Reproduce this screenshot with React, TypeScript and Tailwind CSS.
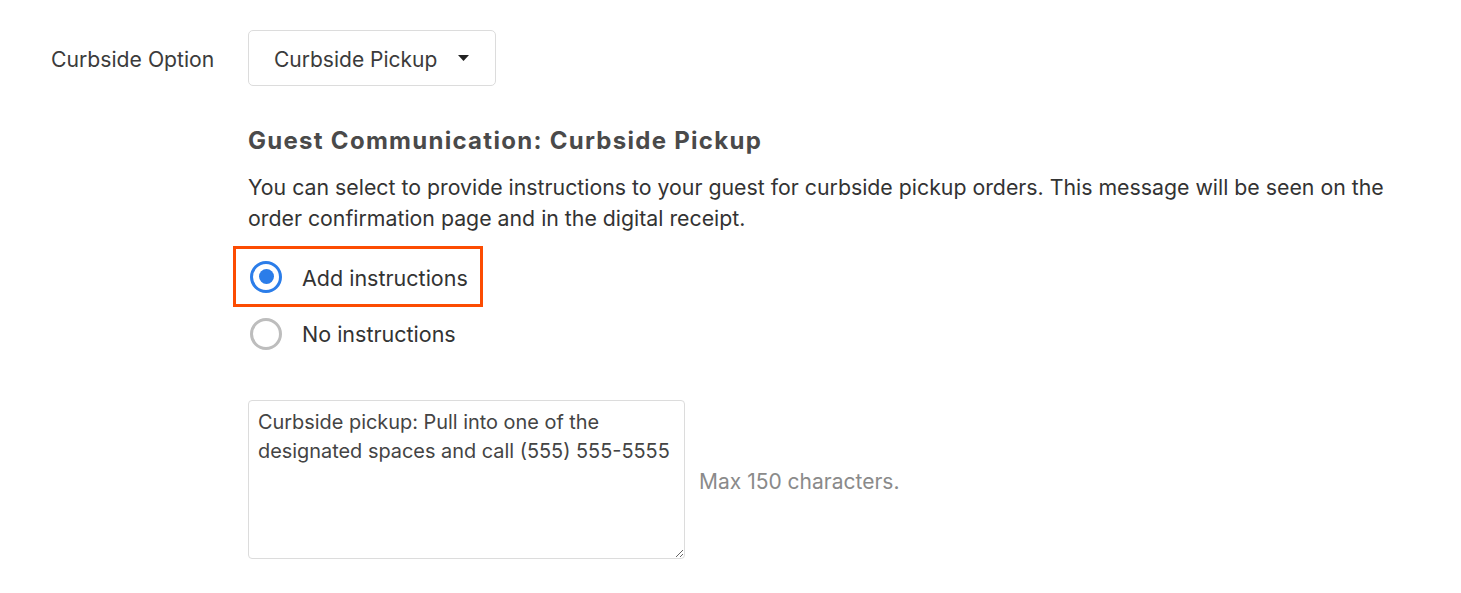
import React from "react";

export default function App() {
  return (
    <div className="w-[1461px] h-[593px] bg-white text-[#333333]" style={{ fontFamily: "Inter, 'Noto Sans', sans-serif" }}>
      <div className="pl-[51px] pt-[30px] flex items-center">
        <div className="w-[197px] text-[21.2px] text-[#3b3b3b] pt-[3px]">Curbside Option</div>
        <button className="h-[56px] w-[248px] border border-[#dcdcdc] rounded-[5px] flex items-center pl-[25px] pr-[26px] justify-between bg-white">
          <span className="text-[21px] text-[#3b3b3b] pt-[3px]">Curbside Pickup</span>
          <svg width="11" height="6" viewBox="0 0 11 6"><path d="M0 0h11L5.5 6z" fill="#222" /></svg>
        </button>
      </div>
      <div className="pl-[248px] pt-[40px]">
        <h2 className="text-[24px] font-bold text-[#4a4a4a] leading-[30px] tracking-[1.28px]">Guest Communication: Curbside Pickup</h2>
        <p className="mt-[16px] text-[21.3px] leading-[31px] text-[#333] w-[1160px]">
          You can select to provide instructions to your guest for curbside pickup orders. This message will be seen on the order confirmation page and in the digital receipt.
        </p>
        <div className="mt-[12px] -ml-[15px] w-[250px] h-[61px] border-[3px] border-[#fc4c02] flex items-center pl-[14px]">
          <span className="w-[32px] h-[32px] rounded-full border-[3px] border-[#2b7de9] flex items-center justify-center">
            <span className="w-[15px] h-[15px] rounded-full bg-[#2b7de9]" />
          </span>
          <span className="ml-[20px] text-[21.5px] text-[#333] pt-[3px]">Add instructions</span>
        </div>
        <div className="mt-[11px] flex items-center h-[32px] ml-[2px]">
          <span className="w-[32px] h-[32px] rounded-full border-[3px] border-[#bdbdbd]" />
          <span className="ml-[20px] text-[21.5px] text-[#333] pt-[1px]">No instructions</span>
        </div>
        <div className="mt-[50px] flex items-center">
          <textarea
            className="w-[437px] h-[159px] border border-[#dcdcdc] rounded-[4px] pl-[9px] pr-[2px] py-[7px] text-[19.9px] leading-[29px] text-[#444] resize-y outline-none overflow-hidden"
            defaultValue="Curbside pickup: Pull into one of the designated spaces and call (555) 555-5555"
            style={{ fontFamily: "Inter, 'Noto Sans', sans-serif" }}
          />
          <span className="ml-[14px] text-[21px] text-[#8a8a8a] pt-[5px]">Max 150 characters.</span>
        </div>
      </div>
    </div>
  );
}
